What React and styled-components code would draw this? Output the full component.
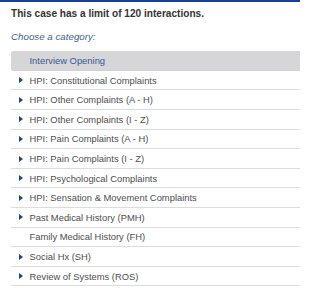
import React from "react";
import styled, { createGlobalStyle } from "styled-components";

const Global = createGlobalStyle`
  html, body { margin: 0; padding: 0; background: #fff; }
  body { font-family: "Liberation Sans", Arial, sans-serif; }
`;

const Page = styled.div`
  border-top: 2px solid #1d3f8c;
  padding: 6px 0 0 11px;
  width: 300px;
  box-sizing: border-box;
  overflow: hidden;
`;

const Heading = styled.div`
  font-size: 10.1px;
  font-weight: bold;
  color: #333;
  line-height: 11.6px;
`;

const Prompt = styled.div`
  margin-top: 11px;
  font-size: 9.75px;
  font-style: italic;
  color: #3d5e8e;
  line-height: 11.2px;
`;

const List = styled.ul`
  list-style: none;
  margin: 9.5px 0 0 0;
  padding: 0;
`;

const Row = styled.li`
  box-sizing: border-box;
  height: 19.6px;
  display: flex;
  align-items: center;
  padding-left: 8px;
  font-size: 9.4px;
  color: ${(p) => (p.$active ? "#37579a" : "#4e4e4e")};
  background: ${(p) => (p.$active ? "#d6d6d8" : "transparent")};
  border-bottom: 1px solid ${(p) => (p.$active ? "#d2d2d4" : "#dcdcdc")};
  border-radius: ${(p) => (p.$active ? "3px 0 0 3px" : "0")};
`;

const Arrow = styled.span`
  width: 0;
  height: 0;
  border-top: 3.5px solid transparent;
  border-bottom: 3.5px solid transparent;
  border-left: 4.5px solid #1b4287;
  margin-right: 6.5px;
  visibility: ${(p) => (p.$hidden ? "hidden" : "visible")};
`;

const items = [
  { label: "Interview Opening", active: true, arrow: false },
  { label: "HPI: Constitutional Complaints", arrow: true },
  { label: "HPI: Other Complaints (A - H)", arrow: true },
  { label: "HPI: Other Complaints (I - Z)", arrow: true },
  { label: "HPI: Pain Complaints (A - H)", arrow: true },
  { label: "HPI: Pain Complaints (I - Z)", arrow: true },
  { label: "HPI: Psychological Complaints", arrow: true },
  { label: "HPI: Sensation & Movement Complaints", arrow: true },
  { label: "Past Medical History (PMH)", arrow: true },
  { label: "Family Medical History (FH)", arrow: false },
  { label: "Social Hx (SH)", arrow: true },
  { label: "Review of Systems (ROS)", arrow: true },
];

export default function App() {
  return (
    <>
      <Global />
      <Page>
        <Heading>This case has a limit of 120 interactions.</Heading>
        <Prompt>Choose a category:</Prompt>
        <List>
          {items.map((it) => (
            <Row key={it.label} $active={it.active}>
              <Arrow $hidden={!it.arrow} />
              {it.label}
            </Row>
          ))}
        </List>
      </Page>
    </>
  );
}
